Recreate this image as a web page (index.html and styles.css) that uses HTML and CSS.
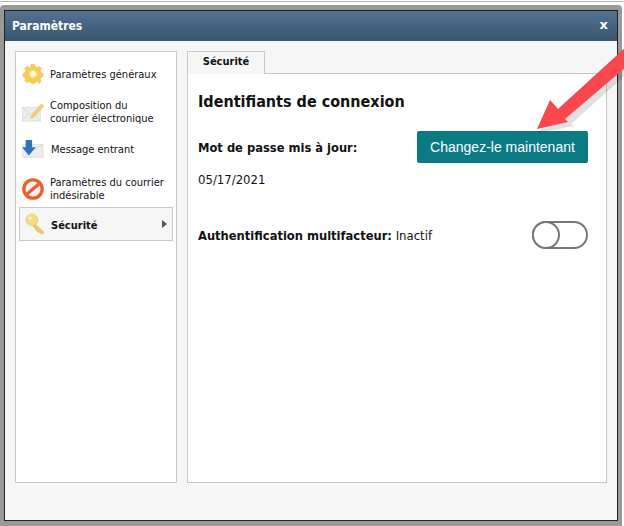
FILE: index.html
```html
<!DOCTYPE html>
<html lang="fr">
<head>
<meta charset="utf-8">
<title>Paramètres</title>
<link rel="stylesheet" href="styles.css">
</head>
<body>
<div class="topline"></div>
<div class="frame">
  <div class="window">
    <header class="titlebar">
      <span class="title">Paramètres</span>
      <span class="close">x</span>
    </header>
    <div class="content">
      <nav class="sidebar">
        <div class="item">
          <svg class="icon" viewBox="0 0 24 24"><defs><radialGradient id="g"><stop offset=".35" stop-color="#fff9e0"/><stop offset=".6" stop-color="#f9d25c"/><stop offset="1" stop-color="#f6c64c"/></radialGradient></defs><path d="M10 1h4l.6 3 2.400 1 2.600-1.700 2.800 2.800L20.700 8.700l1 2.400 2.300.9v4l-2.300.6-1 2.400 1.400 2.300-2.800 2.800L17 21.700l-2.400 1-.6 1.300h-4l-.6-1.300-2.400-1-2.300 1.400-2.800-2.800L3.300 19l-1-2.400L0 16v-4l2.300-.9 1-2.400L1.900 6.100l2.800-2.800L7.400 5l2-1z" transform="translate(1.200 .6) scale(.9)" fill="#f7cd5c" stroke="#f0bb4a" stroke-width=".8"/><circle cx="12" cy="12" r="7.500" fill="url(#g)"/></svg>
          <span class="label">Paramètres généraux</span>
        </div>
        <div class="item">
          <svg class="icon" viewBox="0 0 24 24"><path d="M0 7h20v15H0z" fill="#eceded" stroke="#d0d2d2" stroke-width=".6"/><path d="M0 7l10 8 10-8M0 22l7-8M20 22l-7-8" fill="none" stroke="#c8cbcb" stroke-width=".7"/><path d="M10 16l11-13 3 2.500L12.500 18 9 19z" fill="#f2d078" stroke="#e8bb58" stroke-width=".5"/></svg>
          <span class="label">Composition du<br>courrier électronique</span>
        </div>
        <div class="item item-tight">
          <svg class="icon" viewBox="0 0 24 24"><path d="M1 6h22v14H1z" fill="#eceded" stroke="#d0d2d2" stroke-width=".6"/><path d="M3 20l9-8 11-6" fill="none" stroke="#c8cbcb" stroke-width=".7"/><path d="M4 1h7v8h4l-7.500 9L0 9h4z" fill="#2f74b8"/></svg>
          <span class="label label-in">Message entrant</span>
        </div>
        <div class="item item-low">
          <svg class="icon" viewBox="0 0 24 24"><circle cx="12" cy="12" r="10" fill="#fdf3ec" stroke="#e8602f" stroke-width="3.600"/><path d="M5.500 17.500L18.500 6.500" stroke="#e8602f" stroke-width="3.600"/></svg>
          <span class="label">Paramètres du courrier<br>indésirable</span>
        </div>
        <div class="item item-active">
          <svg class="icon" viewBox="0 0 24 24"><path d="M10 11l11 10.500-3 1.500-2-2-1 .5-1.500-1.500-1-1L8 13z" fill="#eec766" stroke="#dcae45" stroke-width=".5"/><circle cx="7.500" cy="7.500" r="6.500" fill="#f6dc88" stroke="#e6bf5a" stroke-width=".7"/><circle cx="5.500" cy="5.500" r="1.800" fill="#fff6d0"/></svg>
          <span class="label label-active">Sécurité</span>
          <span class="caret"></span>
        </div>
      </nav>
      <main class="main">
        <div class="tabs"><div class="tab">Sécurité</div></div>
        <section class="panel">
          <h1 class="heading">Identifiants de connexion</h1>
          <div class="row-password">
            <strong class="strong">Mot de passe mis à jour:</strong>
            <button class="button" type="button">Changez-le maintenant</button>
          </div>
          <div class="date">05/17/2021</div>
          <div class="row-mfa">
            <span class="mfa"><strong class="strong">Authentification multifacteur:</strong> Inactif</span>
            <span class="toggle"><span class="knob"></span></span>
          </div>
        </section>
      </main>
    </div>
  </div>
</div>
<svg class="arrow" viewBox="0 0 624 526" aria-hidden="true">
  <path d="M537 131L552 102 559 110 626 50V71L569 122 572 124z" fill="#000" opacity=".12" transform="translate(2 2)"/>
  <path d="M537 129L550 100 558 109 626 47V67L565 119 568 122z" fill="#f8474d"/>
</svg>
</body>
</html>
```
FILE: styles.css
```css
* { box-sizing: border-box; }
html, body { margin: 0; height: 526px; overflow: hidden; }
body {
  background: #fff;
  font-family: "DejaVu Sans Condensed", "DejaVu Sans", sans-serif;
  font-stretch: condensed;
  font-size: 11px;
  color: #111;
  position: relative;
}
.topline { height: 1px; margin-top: 1px; background: #b5b5b5; }
.frame {
  margin: 3px 2px 0 0;
  height: 521px;
  padding: 5px 4px 5px 4px;
  background: #999;
  border-radius: 4px 4px 0 0;
}
.window {
  height: 100%;
  border: 1px solid #222;
  background: #f6f6f6;
  display: flex;
  flex-direction: column;
}
.titlebar {
  height: 30px;
  flex: none;
  padding: 0 9px 0 7px;
  display: flex;
  justify-content: space-between;
  align-items: center;
  background: linear-gradient(#537291, #38566f);
  color: #fff;
  font-weight: bold;
  font-size: 12px;
}
.close {
  font-family: "DejaVu Sans", sans-serif;
  font-stretch: normal;
  font-size: 13px;
  line-height: 14px;
  margin-top: -3px;
}
.content {
  flex: 1;
  display: flex;
  gap: 10px;
  padding: 10px 10px 37px 10px;
}
.sidebar {
  width: 162px;
  background: #fff;
  border: 1px solid #c8c8c8;
  padding: 3px 3px 0 3px;
}
.item {
  height: 38px;
  display: flex;
  align-items: center;
  gap: 6px;
  padding-left: 3px;
  line-height: 13px;
}
.item-tight { height: 37px; }
.item-low { height: 39px; padding-top: 2px; }
.item-active {
  height: 34px;
  background: #f6f6f6;
  border: 1px solid #c8c8c8;
  padding-left: 5px;
  gap: 4px;
}
.icon { width: 22px; height: 22px; flex: none; }
.label { white-space: nowrap; }
.label-in { margin-left: 1px; }
.label-active { font-weight: bold; margin-top: 2px; }
.caret {
  margin-left: auto;
  margin-right: 5px;
  border-left: 5px solid #555;
  border-top: 4px solid transparent;
  border-bottom: 4px solid transparent;
}
.main { width: 420px; display: flex; flex-direction: column; }
.tabs { height: 22px; flex: none; display: flex; }
.tab {
  width: 78px;
  height: 23px;
  background: #f6f6f6;
  border: 1px solid #c8c8c8;
  border-bottom: 0;
  position: relative;
  z-index: 1;
  text-align: center;
  font-weight: bold;
  line-height: 20px;
}
.panel {
  flex: 1;
  background: #fff;
  border: 1px solid #c8c8c8;
  padding: 17px 18px 0 10px;
}
.heading {
  margin: 0;
  font-size: 16px;
  line-height: 22px;
  font-weight: bold;
}
.row-password {
  margin-top: 18px;
  display: flex;
  justify-content: space-between;
  align-items: center;
}
.strong { font-size: 12.800px; font-weight: bold; }
.button {
  width: 171px;
  height: 32px;
  border: 0;
  border-radius: 2px;
  background: #0b7b83;
  color: #fff;
  font-family: "Liberation Sans", sans-serif;
  font-stretch: normal;
  font-size: 14px;
  padding: 0;
}
.date { margin-top: 10px; font-size: 13px; line-height: 14px; }
.row-mfa {
  margin-top: 34px;
  display: flex;
  justify-content: space-between;
  align-items: center;
  font-size: 13px;
}
.toggle {
  width: 56px;
  height: 28px;
  border: 2.500px solid #777;
  border-radius: 14px;
  background: #fff;
  display: flex;
}
.knob {
  width: 28px;
  height: 28px;
  margin: -2.500px;
  border: 2.500px solid #777;
  border-radius: 50%;
  background: #fff;
}
.arrow {
  position: absolute;
  left: 0;
  top: 0;
  width: 624px;
  height: 526px;
  pointer-events: none;
}
```
